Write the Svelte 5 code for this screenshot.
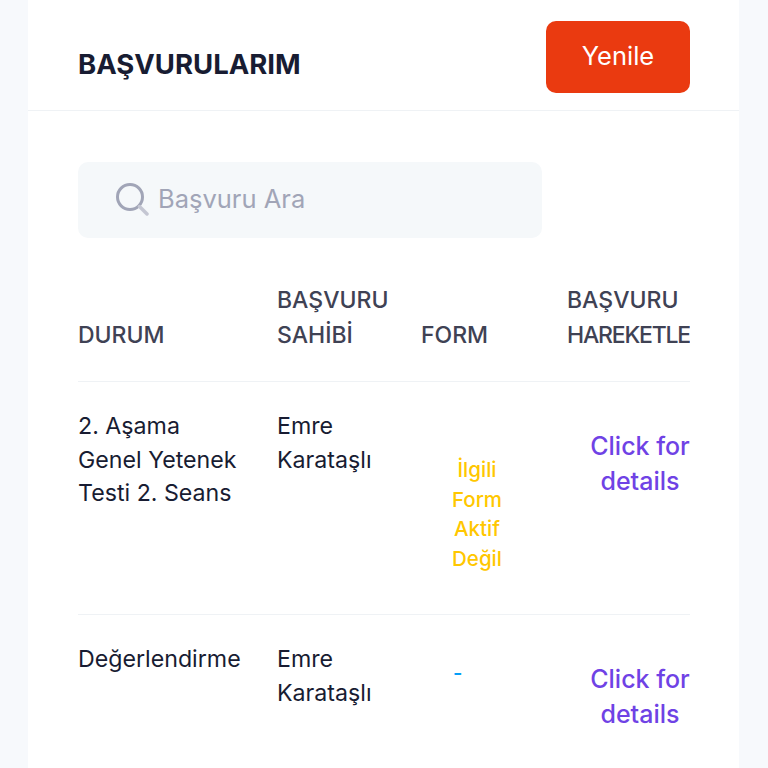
<script lang="ts">
	const rows = [
		{
			status: '2. Aşama Genel Yetenek Testi 2. Seans',
			owner: 'Emre Karataşlı',
			form: 'İlgili Form Aktif Değil',
			formClass: 'form-off'
		},
		{
			status: 'Değerlendirme',
			owner: 'Emre Karataşlı',
			form: '-',
			formClass: 'form-none'
		}
	];
</script>

<div class="page">
	<main class="card">
		<header class="card-header">
			<h1>BAŞVURULARIM</h1>
			<button type="button" class="refresh">Yenile</button>
		</header>

		<div class="card-body">
			<label class="search">
				<svg viewBox="0 0 34 34" width="34" height="34" aria-hidden="true">
					<circle cx="15" cy="15" r="12.5" fill="none" stroke="#a1a5b7" stroke-width="3" />
					<path d="M24.5 24.5 L32 32" fill="none" stroke="#c4c6d2" stroke-width="3.5" stroke-linecap="round" />
				</svg>
				<input type="text" placeholder="Başvuru Ara" />
			</label>

			<div class="table-wrap">
				<table>
					<colgroup>
						<col class="col-status" />
						<col class="col-owner" />
						<col class="col-form" />
						<col class="col-action" />
					</colgroup>
					<thead>
						<tr>
							<th>DURUM</th>
							<th>BAŞVURU SAHİBİ</th>
							<th>FORM</th>
							<th class="th-action">BAŞVURU<br /><span class="th-tight">HAREKETLERİ</span></th>
						</tr>
					</thead>
					<tbody>
						{#each rows as row}
							<tr>
								<td>{row.status}</td>
								<td>{row.owner}</td>
								<td class="td-form"><span class={row.formClass}>{row.form}</span></td>
								<td class="td-action"><a href="#details">Click for details</a></td>
							</tr>
						{/each}
					</tbody>
				</table>
			</div>
		</div>
	</main>
</div>

<style>
	:global(body) {
		margin: 0;
		background: #f7f9fc;
		font-family: Inter, "Noto Sans", sans-serif;
	}

	.page {
		height: 768px;
		overflow: hidden;
		padding: 0 29px 0 28px;
		box-sizing: border-box;
	}

	.card {
		background: #fff;
		height: 100%;
	}

	.card-header {
		height: 111px;
		box-sizing: border-box;
		border-bottom: 1px solid #eff2f5;
		display: flex;
		align-items: flex-start;
		justify-content: space-between;
		padding: 21px 49px 0 50px;
	}

	h1 {
		margin: 24px 0 0;
		font-size: 27.5px;
		line-height: 38px;
		font-weight: 700;
		color: #181c32;
	}

	.refresh {
		width: 144px;
		height: 72px;
		border: none;
		border-radius: 10px;
		background: #ea3a10;
		color: #fff;
		font: 400 25.5px/1 Inter, sans-serif;
		padding: 0 0 2px;
	}

	.card-body {
		padding: 51px 49px 0 50px;
	}

	.search {
		width: 464px;
		height: 76px;
		border-radius: 10px;
		background: #f5f8fa;
		display: flex;
		align-items: center;
		gap: 9px;
		padding-left: 37px;
		box-sizing: border-box;
	}

	.search svg {
		margin-top: -2px;
	}

	.search input {
		border: none;
		background: none;
		outline: none;
		flex: 1;
		min-width: 0;
		font: 400 25.5px/1 Inter, sans-serif;
		color: #181c32;
		padding: 0 0 4px;
	}

	.search input::placeholder {
		color: #a1a5b7;
		opacity: 1;
	}

	.table-wrap {
		margin-top: 45px;
		overflow: hidden;
	}

	table {
		width: 635px;
		table-layout: fixed;
		border-collapse: collapse;
	}

	.col-status {
		width: 199px;
	}

	.col-owner {
		width: 144px;
	}

	.col-form {
		width: 146px;
	}

	.col-action {
		width: 146px;
	}

	th {
		text-align: left;
		vertical-align: bottom;
		font-size: 23px;
		line-height: 35px;
		font-weight: 500;
		color: #3f4254;
		padding: 0 0 28px;
		border-bottom: 1px solid #eff2f5;
	}

	.th-action {
		white-space: nowrap;
	}

	.th-tight {
		letter-spacing: -1.2px;
	}

	td {
		vertical-align: top;
		font-size: 23.2px;
		line-height: 33.5px;
		color: #181c32;
		padding: 28px 30px 0 0;
	}

	tbody tr:first-child {
		height: 233px;
		border-bottom: 1px solid #eff2f5;
	}

	.td-form {
		padding-right: 34px;
		font-size: 20.5px;
		line-height: 29.7px;
		font-weight: 500;
	}

	.form-off {
		display: block;
		width: 70px;
		margin: 45px auto 0;
		text-align: center;
		color: #ffc700;
	}

	.form-none {
		display: block;
		margin: 15px 0 0 32px;
		color: #009ef7;
	}

	.td-action {
		padding: 47px 0 0;
		text-align: center;
		font-size: 25px;
		line-height: 35px;
	}

	.td-action a {
		color: #6f42e5;
		font-weight: 500;
		text-decoration: none;
	}
</style>
